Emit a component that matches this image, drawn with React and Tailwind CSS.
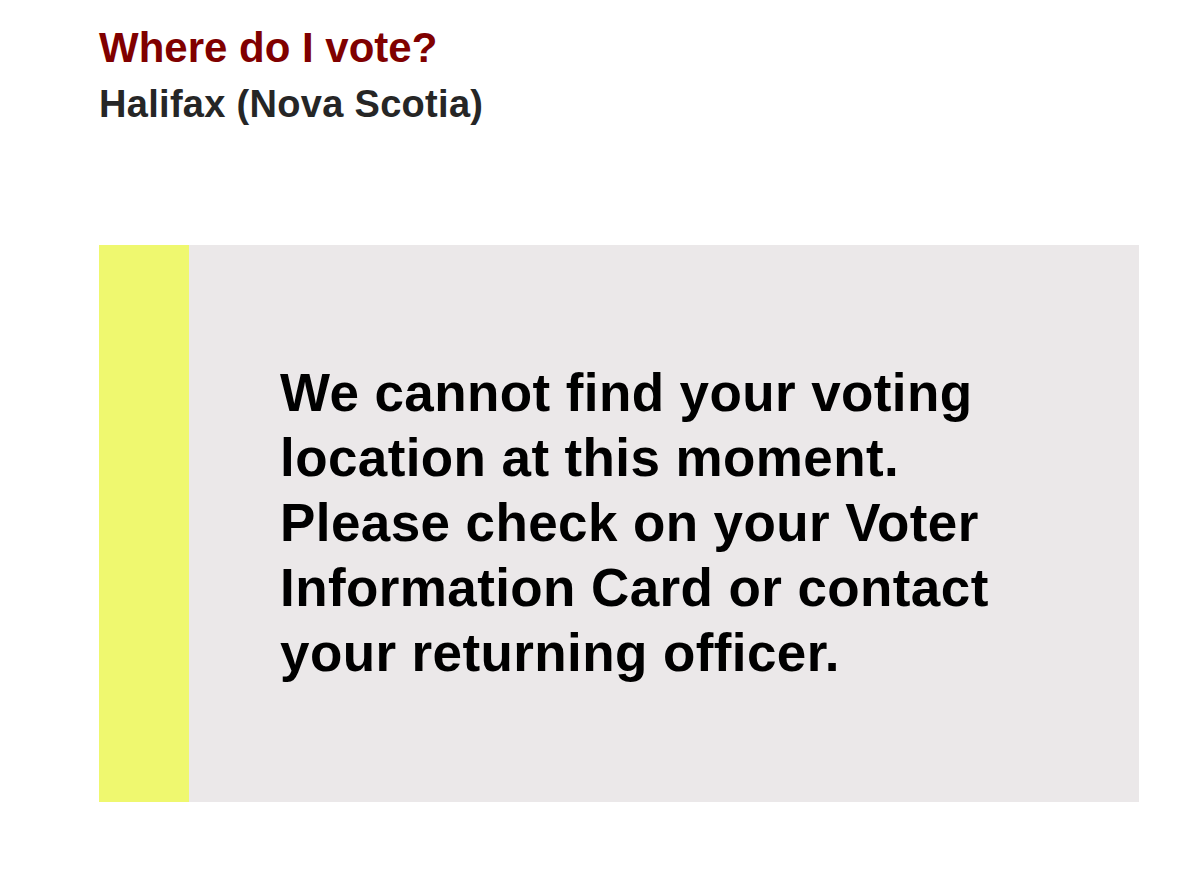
import React from 'react';

const App = () => {
    return (
        <div className="min-h-[890px] bg-white pl-[99px] pr-[40px] pt-[24px]" style={{ fontFamily: '"Liberation Sans", Arial, sans-serif' }}>
            <h1 className="text-[42px] leading-[48px] font-bold text-[#800000]">Where do I vote?</h1>
            <h2 className="mt-[11px] text-[38px] leading-[42px] font-bold tracking-[0.3px] text-[#262626]">Halifax (Nova Scotia)</h2>

            <div className="mt-[120px] flex w-[1040px] h-[557px] bg-[#ebe8e9]">
                <div className="w-[90px] shrink-0 bg-[#eff86f]"></div>
                <div className="flex flex-1 items-center pl-[91px] pr-[91px] pb-[2px]">
                    <p className="text-[53px] leading-[65px] font-bold tracking-[0.4px] text-black">
                        We cannot find your voting location at this moment. Please check on your Voter Information Card or contact your returning officer.
                    </p>
                </div>
            </div>
        </div>
    );
};

export default App;
